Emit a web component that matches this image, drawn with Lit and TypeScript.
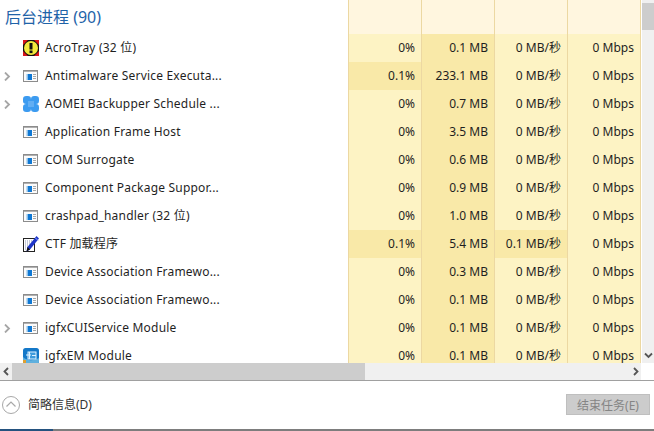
import { LitElement, html, css, svg } from "lit";
import { customElement } from "lit/decorators.js";

type Row = [string, string, string, string, string, string, boolean, boolean, boolean];
const W = "win", A = "acro", O = "aomei", C = "ctf", I = "igfx";
// name, icon, cpu, mem, disk, net, expandable, hotCpu, hotDisk
const rows: Row[] = [
  ["AcroTray (32 位)", A, "0%", "0.1 MB", "0 MB/秒", "0 Mbps", false, false, false],
  ["Antimalware Service Executa...", W, "0.1%", "233.1 MB", "0 MB/秒", "0 Mbps", true, true, false],
  ["AOMEI Backupper Schedule ...", O, "0%", "0.7 MB", "0 MB/秒", "0 Mbps", true, false, false],
  ["Application Frame Host", W, "0%", "3.5 MB", "0 MB/秒", "0 Mbps", false, false, false],
  ["COM Surrogate", W, "0%", "0.6 MB", "0 MB/秒", "0 Mbps", false, false, false],
  ["Component Package Suppor...", W, "0%", "0.9 MB", "0 MB/秒", "0 Mbps", false, false, false],
  ["crashpad_handler (32 位)", W, "0%", "1.0 MB", "0 MB/秒", "0 Mbps", false, false, false],
  ["CTF 加载程序", C, "0.1%", "5.4 MB", "0.1 MB/秒", "0 Mbps", false, true, true],
  ["Device Association Framewo...", W, "0%", "0.3 MB", "0 MB/秒", "0 Mbps", false, false, false],
  ["Device Association Framewo...", W, "0%", "0.1 MB", "0 MB/秒", "0 Mbps", false, false, false],
  ["igfxCUIService Module", W, "0%", "0.1 MB", "0 MB/秒", "0 Mbps", true, false, false],
  ["igfxEM Module", I, "0%", "0.1 MB", "0 MB/秒", "0 Mbps", false, false, false],
];

const icons: Record<string, unknown> = {
  win: svg`<svg width="16" height="16" viewBox="0 0 16 16"><rect x=".5" y="2.500" width="14" height="11" fill="#fbfbfb" stroke="#8c8c8c"/><rect x="1" y="3" width="13" height="1" fill="#b0b0b0"/><rect x="5" y="6" width="4" height="6" fill="#0f78d4"/><rect x="3.500" y="6" width="1.500" height="6" fill="#8cc0ea"/><path d="M10 6.500h3M10 8.500h3M10 10.500h3" stroke="#a8a8a8"/></svg>`,
  acro: svg`<svg width="16" height="16" viewBox="0 0 16 16"><rect width="16" height="16" fill="#111"/><path d="M0 0h5L0 5zM16 0v5L11 0zM0 16v-5l5 5zM16 16h-5l5-5z" fill="#d8141a"/><circle cx="8" cy="8" r="7" fill="#f3e93c"/><rect x="6.500" y="3" width="3" height="6.500" fill="#111"/><rect x="6.500" y="10.500" width="3" height="2.600" fill="#111"/></svg>`,
  aomei: svg`<svg width="16" height="16" viewBox="0 0 16 16"><g fill="#3c9bf0"><rect x="0" y="0" width="8" height="8" rx="3.200"/><rect x="8" y="0" width="8" height="8" rx="3.200"/><rect x="0" y="8" width="8" height="8" rx="3.200"/><rect x="8" y="8" width="8" height="8" rx="3.200"/></g><rect x="5" y="5" width="6" height="6" fill="#62aef3"/></svg>`,
  ctf: svg`<svg width="16" height="16" viewBox="0 0 16 16"><rect x=".5" y="2.500" width="11" height="13" fill="#fff" stroke="#222"/><path d="M2 5h8M2 7h6M2 9h5M2 11h3M2 13h2" stroke="#8a94b8" stroke-dasharray="1 1"/><path d="M4.500 11 13.500 0 16 2.500 7 13.500 3.500 15.500z" fill="#1d35c8"/><path d="M12.500 2 15 4.500" stroke="#8fa6ff"/><path d="M4.500 11 7 13.500 3.500 15.500z" fill="#111"/></svg>`,
  igfx: svg`<svg width="16" height="16" viewBox="0 0 16 16"><rect width="16" height="16" rx="2.500" fill="#1478c8"/><path d="M0 9c4 4 10 4 16 1v3.500a2.500 2.500 0 0 1-2.500 2.500h-11A2.500 2.500 0 0 1 0 13.500z" fill="#5fb0de"/><rect x="5" y="4" width="8" height="7" fill="#3f9bdc" stroke="#dff2ff"/><path d="M3 7h5M6.500 4v7M9 7.500h4" stroke="#dff2ff"/><rect x="0" y="12" width="3" height="4" fill="#e0a030"/></svg>`,
};

const chev = (d: string, color = "#555", w = 1.8, size = 9) =>
  svg`<svg width="${size}" height="${size}" viewBox="0 0 9 9"><path d="${d}" fill="none" stroke="${color}" stroke-width="${w}"/></svg>`;

@customElement("app-root")
export class AppRoot extends LitElement {
  static styles = css`
    :host {
      display: flex;
      flex-direction: column;
      width: 654px;
      height: 431px;
      overflow: hidden;
      background: #fff;
      font-family: "Noto Sans", "Noto Sans CJK SC", sans-serif;
      font-size: 12px;
      color: #1f1f1f;
    }
    .main { display: flex; height: 363px; flex: none; }
    .table { width: 641px; flex: none; overflow: hidden; }
    .row {
      display: grid;
      grid-template-columns: 348px 73px 73px 73px 74px;
      height: 28px;
    }
    .head { height: 34px; }
    .title {
      display: flex;
      align-items: center;
      padding: 0 0 2px 5px;
      font-size: 16px;
      color: #1f63a8;
    }
    .name { display: flex; align-items: center; white-space: nowrap; }
    .label { letter-spacing: 0.2px; padding-bottom: 2px; }
    .exp { width: 23px; flex: none; display: flex; align-items: center; padding-left: 3px; box-sizing: border-box; }
    .ic { width: 16px; height: 16px; flex: none; margin-right: 6px; }
    .ic svg, .exp svg { display: block; }
    .cell {
      display: flex;
      align-items: center;
      justify-content: flex-end;
      padding: 0 6px 2px 0;
      border-left: 1px solid #ecd8a2;
      background: #fdf3c4;
      white-space: nowrap;
    }
    .cell.hot { background: #f9e9a8; }
    .cell.end { border-right: 1px solid #ecd8a2; }
    .head .cell { background: #fff6df; }
    .vbar {
      width: 12px;
      margin-left: 1px;
      flex: none;
      display: flex;
      flex-direction: column;
      background: #f0f0f0;
      padding-top: 3px;
      box-sizing: border-box;
    }
    .vthumb { height: 27px; background: #cdcdcd; }
    .vdown { margin-top: auto; height: 16px; display: flex; align-items: center; justify-content: center; }
    .hbar { display: flex; height: 17px; flex: none; }
    .htrack { width: 641px; display: flex; align-items: center; background: #f0f0f0; }
    .arrow { width: 12px; height: 17px; flex: none; display: flex; align-items: center; justify-content: center; }
    .hthumb { width: 353px; height: 17px; background: #cdcdcd; flex: none; }
    .hrest { flex: 1; }
    .footer {
      flex: 1;
      display: flex;
      align-items: center;
      border-top: 1px solid #a0a0a0;
      padding: 0 4px 1px 2px;
    }
    .toggle { display: block; margin-right: 8px; flex: none; }
    .less { color: #333; padding-bottom: 1px; }
    .btn {
      margin-left: auto;
      width: 84px;
      height: 21px;
      box-sizing: border-box;
      display: flex;
      align-items: center;
      justify-content: center;
      background: #cccccc;
      border: 1px solid #bfbfbf;
      color: #858585;
    }
    .strip { display: flex; height: 2px; flex: none; background: #7d7d7d; }
    .strip-blue { width: 53px; background: #24527f; }
  `;

  render() {
    return html`
      <div class="main">
        <div class="table">
          <div class="row head">
            <div class="title">后台进程 (90)</div>
            <div class="cell"></div><div class="cell"></div><div class="cell"></div><div class="cell end"></div>
          </div>
          ${rows.map(
            ([n, ic, cpu, mem, disk, net, ex, hc, hd]) => html`
              <div class="row">
                <div class="name">
                  <div class="exp">${ex ? chev("M2 .5l4 4-4 4", "#a6a6a6", 1.8) : ""}</div>
                  <div class="ic">${icons[ic]}</div>
                  <span class="label">${n}</span>
                </div>
                <div class="cell ${hc ? "hot" : ""}">${cpu}</div>
                <div class="cell hot">${mem}</div>
                <div class="cell ${hd ? "hot" : ""}">${disk}</div>
                <div class="cell end">${net}</div>
              </div>
            `
          )}
        </div>
        <div class="vbar">
          <div class="vthumb"></div>
          <div class="vdown">${chev("M1 2.500l3.500 3.500L8 2.500")}</div>
        </div>
      </div>
      <div class="hbar">
        <div class="htrack">
          <div class="arrow">${chev("M6 1L2.500 4.500 6 8")}</div>
          <div class="hthumb"></div>
          <div class="hrest"></div>
          <div class="arrow">${chev("M3 1l3.500 3.500L3 8")}</div>
        </div>
      </div>
      <div class="footer">
        <svg class="toggle" width="18" height="18" viewBox="0 0 18 18">
          <circle cx="9" cy="9" r="8.500" fill="none" stroke="#a8a8a8"/>
          <path d="M4.500 10.500 9 6l4.500 4.500" fill="none" stroke="#a8a8a8" stroke-width="1.200"/>
        </svg>
        <span class="less">简略信息(D)</span>
        <div class="btn">结束任务(E)</div>
      </div>
      <div class="strip"><div class="strip-blue"></div></div>
    `;
  }
}
